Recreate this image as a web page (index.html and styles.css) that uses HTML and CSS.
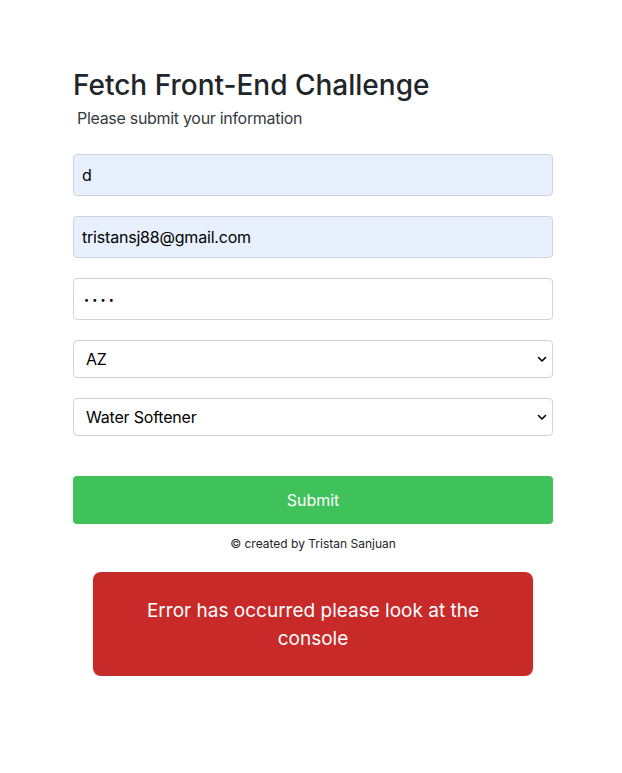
FILE: index.html
```html
<!DOCTYPE html>
<html lang="en">
<head>
<meta charset="utf-8">
<title>Fetch Front-End Challenge</title>
<link rel="stylesheet" href="styles.css">
</head>
<body>
<main class="page">
  <h1 class="title">Fetch Front-End Challenge</h1>
  <p class="subtitle">Please submit your information</p>
  <form class="form">
    <input class="field autofill" type="text" value="d">
    <input class="field autofill" type="email" value="tristansj88@gmail.com">
    <input class="field password" type="password" value="abcd">
    <select class="select"><option>AZ</option></select>
    <select class="select"><option>Water Softener</option></select>
    <button class="submit" type="button">Submit</button>
  </form>
  <p class="credit">© created by Tristan Sanjuan</p>
  <div class="error">Error has occurred please look at the console</div>
</main>
</body>
</html>
```
FILE: styles.css
```css
* { box-sizing: border-box; }
html, body { margin: 0; padding: 0; background: #fff; }
body { font-family: Inter, "Noto Sans", sans-serif; color: #212529; }
.page {
  width: 484px;
  margin: 0 auto;
  padding: 68px 0 0 4px;
  display: flex;
  flex-direction: column;
}
.title {
  margin: 0;
  font-size: 28px;
  font-weight: 500;
  line-height: 34px;
  color: #212529;
  letter-spacing: 0;
}
.subtitle {
  margin: 6px 0 0 4px;
  font-size: 16px;
  line-height: 20px;
  color: #343a40;
  letter-spacing: -0.3px;
}
.form {
  margin-top: 26px;
  display: flex;
  flex-direction: column;
}
.field {
  height: 42px;
  width: 100%;
  border: 1px solid #ced4da;
  border-radius: 4px;
  padding: 0 8px;
  font-family: inherit;
  font-size: 16px;
  color: #000;
  background: #fff;
  margin-bottom: 20px;
  outline: none;
  letter-spacing: -0.2px;
}
.password {
  font-size: 9px;
  letter-spacing: 3.2px;
  padding-left: 10px;
}
.autofill { background: #e8f0fe; }
.select {
  appearance: none;
  -webkit-appearance: none;
  height: 38px;
  width: 100%;
  border: 1px solid #ced4da;
  border-radius: 4px;
  padding: 0 12px;
  font-family: inherit;
  font-size: 16px;
  letter-spacing: -0.2px;
  color: #000;
  background: #fff url("data:image/svg+xml,%3Csvg xmlns='http://www.w3.org/2000/svg' width='10' height='7' viewBox='0 0 10 7'%3E%3Cpath d='M1.5 1.5 5 5 8.5 1.5' fill='none' stroke='%23000' stroke-width='1.6' stroke-linecap='round' stroke-linejoin='round'/%3E%3C/svg%3E") no-repeat right 5px center;
  margin-bottom: 20px;
}
.select + .select { margin-bottom: 40px; }
.submit {
  height: 48px;
  width: 100%;
  border: none;
  border-radius: 4px;
  background: #3fc25a;
  color: #fff;
  font-family: inherit;
  font-size: 16px;
}
.credit {
  margin: 12px 0 0;
  text-align: center;
  font-size: 12px;
  line-height: 16px;
  color: #212529;
}
.error {
  margin: 20px auto 0;
  width: 440px;
  height: 104px;
  border-radius: 8px;
  background: #c82a2a;
  color: #fff;
  font-size: 19px;
  line-height: 28px;
  text-align: center;
  padding: 25px 50px 0;
  box-shadow: 0 1px 3px rgba(0,0,0,0.12);
}
```
